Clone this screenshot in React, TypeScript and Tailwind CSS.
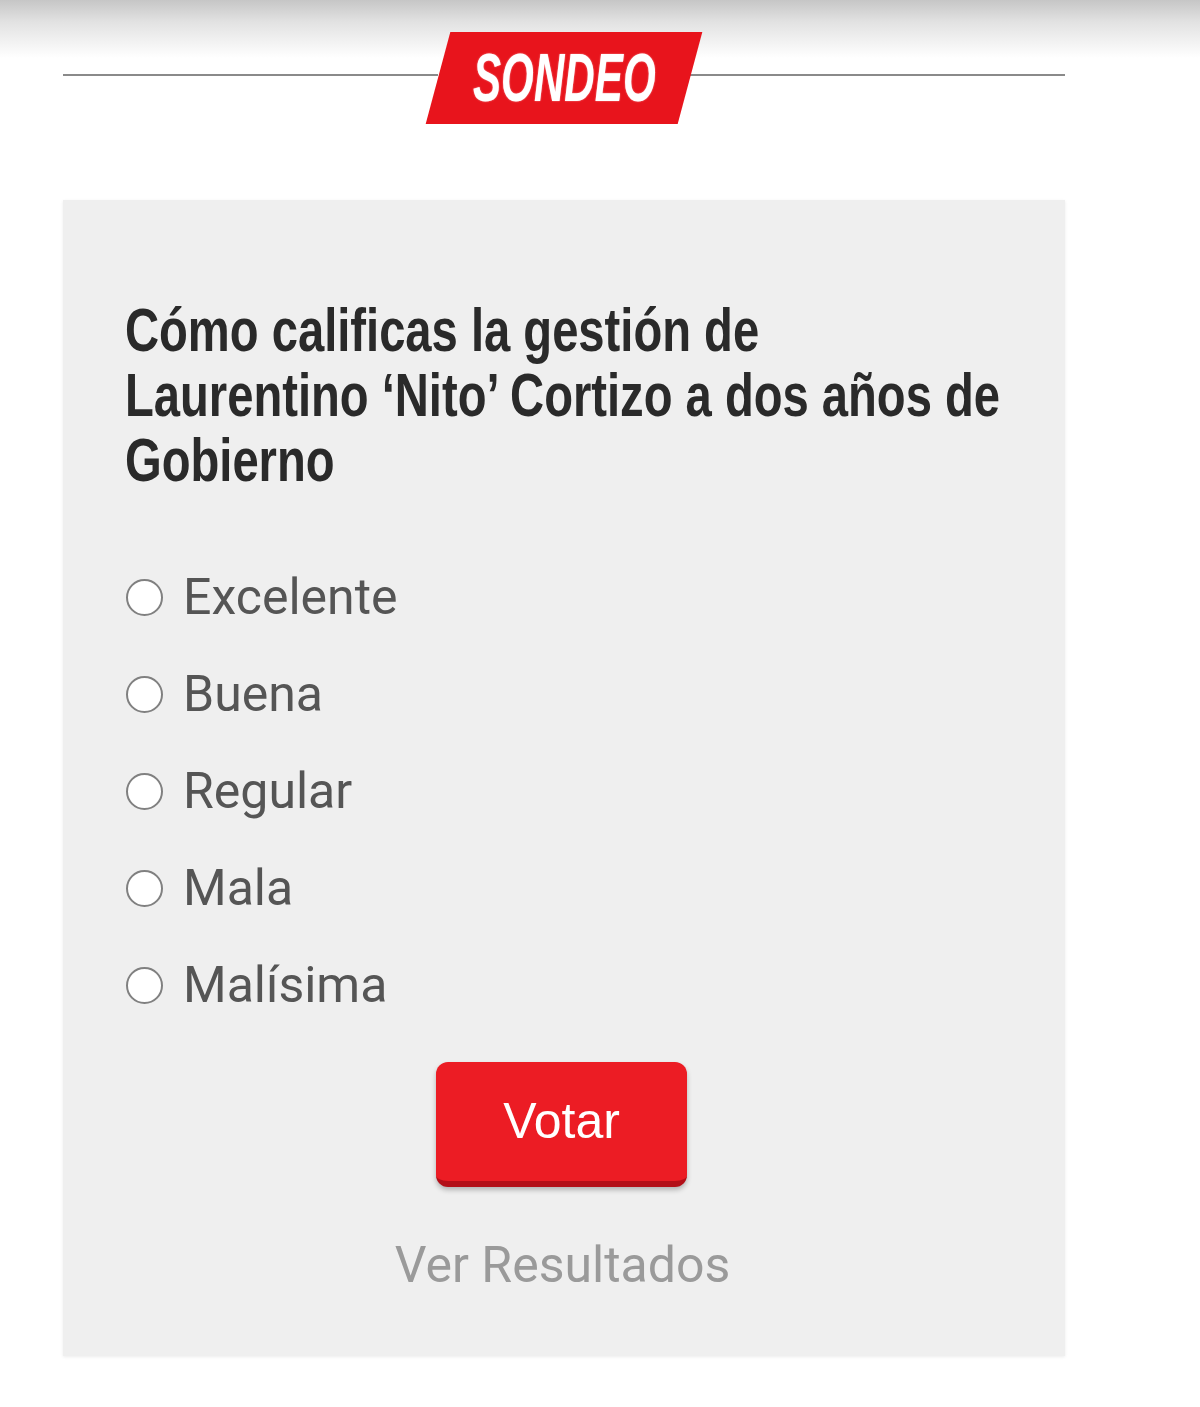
import React from "react";

const options = ["Excelente", "Buena", "Regular", "Mala", "Malísima"];

export default function App() {
  return (
    <div className="min-h-[1407px] bg-white bg-[linear-gradient(to_bottom,#c6c6c6_0px,#e2e2e2_22px,#ffffff_58px)] bg-no-repeat pt-[32px]">
      <div className="ml-[63px] w-[1002px]">
        {/* Header */}
        <div className="flex h-[92px] items-start">
          <div className="mt-[42px] h-[2px] flex-1 bg-[#8a8a8a]" />
          <div className="relative flex h-[92px] w-[252px] items-center justify-center">
            <div className="absolute inset-0 -skew-x-[15deg] bg-[#e8141c]" />
            <span className="relative scale-x-[0.68] scale-y-[1.1] font-['Liberation_Sans',sans-serif] text-[62px] leading-none font-bold italic text-white [text-shadow:0_0_2px_rgba(255,255,255,0.6)]">
              SONDEO
            </span>
          </div>
          <div className="mt-[42px] h-[2px] flex-1 bg-[#8a8a8a]" />
        </div>

        {/* Card */}
        <div className="mt-[76px] bg-[#efefef] px-[62px] pt-[98px] pb-[61px] shadow-[0_1px_3px_rgba(0,0,0,0.08)]">
          <h2 className="origin-left scale-x-[0.773] font-['Liberation_Sans',sans-serif] text-[61px] leading-[65px] font-bold whitespace-nowrap text-[#2a2a2a]">
            Cómo calificas la gestión de
            <br />
            Laurentino ‘Nito’ Cortizo a dos años de
            <br />
            Gobierno
          </h2>

          <div className="mt-[56px] flex flex-col">
            {options.map((o) => (
              <label key={o} className="flex h-[97px] items-center gap-[20px]">
                <span className="ml-[1px] h-[37px] w-[37px] shrink-0 rounded-full border-2 border-[#808080] bg-white" />
                <span className="font-['Roboto',sans-serif] text-[50px] leading-[97px] text-[#555555]">
                  {o}
                </span>
              </label>
            ))}
          </div>

          <div className="mt-[28px] flex justify-center pr-[5px]">
            <button className="flex h-[125px] w-[251px] items-center justify-center rounded-[12px] border-b-[6px] border-[#b30f18] bg-[#ec1c24] font-['Liberation_Sans',sans-serif] text-[50px] text-white shadow-[0_3px_5px_rgba(0,0,0,0.25)]">
              Votar
            </button>
          </div>

          <div className="mt-[48px] pr-[3px] text-center font-['Roboto',sans-serif] text-[50px] leading-[60px] text-[#9a9a9a]">
            Ver Resultados
          </div>
        </div>
      </div>
    </div>
  );
}
